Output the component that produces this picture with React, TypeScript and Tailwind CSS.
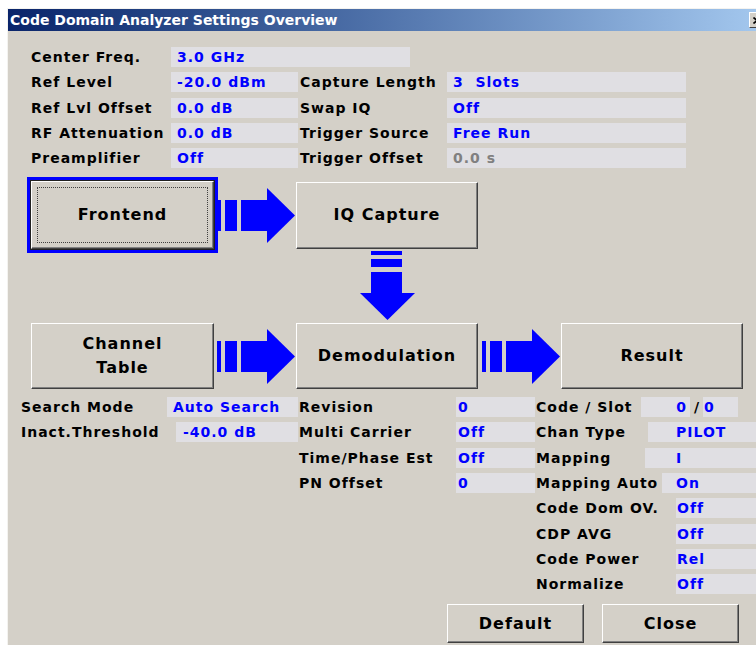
import React from 'react';

const BLUE = '#0000ff';

// Horizontal flow arrow: two bars, a shaft and a head
function RightArrow({ className = '' }: { className?: string }) {
    return (
        <svg width="78" height="55" viewBox="0 0 78 55" className={className} shapeRendering="crispEdges">
            <rect x="0" y="12" width="4" height="31" fill={BLUE} />
            <rect x="8" y="12" width="12" height="31" fill={BLUE} />
            <rect x="24" y="12" width="27" height="31" fill={BLUE} />
            <polygon points="50,0 78,27.5 50,55" fill={BLUE} shapeRendering="auto" />
        </svg>
    );
}

function DownArrow({ className = '' }: { className?: string }) {
    return (
        <svg width="55" height="69" viewBox="0 0 55 69" className={className} shapeRendering="crispEdges">
            <rect x="11" y="0" width="31" height="4" fill={BLUE} />
            <rect x="11" y="8" width="31" height="8" fill={BLUE} />
            <rect x="11" y="21" width="31" height="22" fill={BLUE} />
            <polygon points="0,42 55,42 27.5,69" fill={BLUE} shapeRendering="auto" />
        </svg>
    );
}

function Btn({ children, className = '' }: { children: React.ReactNode; className?: string }) {
    return (
        <div
            className={`flex flex-col items-center justify-center bg-[#d4d0c8] border border-t-white border-l-white border-r-[#404040] border-b-[#404040] shadow-[inset_-1px_-1px_0_#808080] text-[16px] font-bold tracking-[1px] leading-[24px] text-black ${className}`}
        >
            {children}
        </div>
    );
}

const label = 'text-[14px] leading-[20px] font-bold tracking-[1px] text-black whitespace-nowrap';
const field = 'h-[20px] bg-[#e0dfe3] text-[14px] leading-[20px] font-bold tracking-[1px] text-[#0000ff] flex items-center whitespace-pre';

const topRows = [
    { l: 'Ref Level', v: '-20.0 dBm', l2: 'Capture Length', v2: '3  Slots' },
    { l: 'Ref Lvl Offset', v: '0.0 dB', l2: 'Swap IQ', v2: 'Off' },
    { l: 'RF Attenuation', v: '0.0 dB', l2: 'Trigger Source', v2: 'Free Run' },
    { l: 'Preamplifier', v: 'Off', l2: 'Trigger Offset', v2: '0.0 s', gray: true },
];

const demodRows = [
    { l: 'Revision', v: '0' },
    { l: 'Multi Carrier', v: 'Off' },
    { l: 'Time/Phase Est', v: 'Off' },
    { l: 'PN Offset', v: '0' },
];

const resultRows = [
    { l: 'Chan Type', v: 'PILOT', w: 'w-[113px]', p: 'pl-[28px]' },
    { l: 'Mapping', v: 'I', w: 'w-[110px]', p: 'pl-[31px]' },
    { l: 'Mapping Auto', v: 'On', w: 'w-[127px]', p: 'pl-[14px]' },
    { l: 'Code Dom OV.', v: 'Off', w: 'w-[141px]', p: 'pl-[1px]' },
    { l: 'CDP AVG', v: 'Off', w: 'w-[141px]', p: 'pl-[1px]' },
    { l: 'Code Power', v: 'Rel', w: 'w-[141px]', p: 'pl-[1px]' },
    { l: 'Normalize', v: 'Off', w: 'w-[141px]', p: 'pl-[1px]' },
];

export default function App() {
    return (
        <div className="w-[756px] h-[645px] bg-white overflow-hidden font-['DejaVu_Sans',sans-serif]">
            <div className="ml-[7px] mt-[8px] w-[763px] h-[640px] border-l border-t border-[#f4f3f0] bg-[#d4d0c8]">
                {/* Title bar */}
                <div className="h-[22px] flex items-center bg-gradient-to-r from-[#0a246a] to-[#a6caf0] pl-[2px] pr-[5px]">
                    <div className="flex-1 text-white text-[14px] font-bold leading-none">Code Domain Analyzer Settings Overview</div>
                    <div className="w-[16px] h-[16px] flex items-center justify-center bg-[#d4d0c8] border border-t-white border-l-white border-r-[#404040] border-b-[#404040]">
                        <svg width="8" height="7" viewBox="0 0 8 7">
                            <path d="M0.5 0.5 L7.5 6.5 M7.5 0.5 L0.5 6.5" stroke="#000" strokeWidth="1.6" />
                        </svg>
                    </div>
                </div>

                {/* Frontend / capture settings */}
                <div className="pt-[16px] pl-[23px] flex flex-col gap-[5.3px]">
                    <div className="flex items-center">
                        <div className={`${label} w-[140px]`}>Center Freq.</div>
                        <div className={`${field} w-[239px] pl-[6px]`}>3.0 GHz</div>
                    </div>
                    {topRows.map((r) => (
                        <div key={r.l} className="flex items-center">
                            <div className={`${label} w-[140px]`}>{r.l}</div>
                            <div className={`${field} w-[127px] pl-[6px]`}>{r.v}</div>
                            <div className={`${label} w-[149px] pl-[2px]`}>{r.l2}</div>
                            <div className={`${field} w-[239px] pl-[6px] ${r.gray ? 'text-[#808080]' : ''}`}>{r.v2}</div>
                        </div>
                    ))}
                </div>

                {/* Block diagram */}
                <div className="mt-[9px] pl-[19px] grid grid-cols-[191px_78px_182px_83px_182px] grid-rows-[76px_70px_66px]">
                    <div className="border-[3px] border-[#0000ff] flex">
                        <div className="flex-1 border border-[#202020] flex">
                            <Btn className="flex-1 relative">
                                Frontend
                                <span className="absolute inset-[5px] border border-dotted border-[#404040]" />
                            </Btn>
                        </div>
                    </div>
                    <RightArrow className="self-center -ml-px" />
                    <Btn className="h-[67px] self-center">IQ Capture</Btn>
                    <div />
                    <div />

                    <div />
                    <div />
                    <DownArrow className="justify-self-center -mt-[2px]" />
                    <div />
                    <div />

                    <Btn className="w-[183px] justify-self-center">
                        <span>Channel</span>
                        <span>Table</span>
                    </Btn>
                    <RightArrow className="self-center -ml-px" />
                    <Btn>Demodulation</Btn>
                    <RightArrow className="self-center ml-[4px]" />
                    <Btn>Result</Btn>
                </div>

                {/* Channel / demodulation / result settings */}
                <div className="mt-[8px] pl-[13px] flex items-start">
                    <div className="w-[277px] flex flex-col gap-[5.3px]">
                        <div className="flex items-center">
                            <div className={`${label} w-[146px]`}>Search Mode</div>
                            <div className={`${field} w-[131px] pl-[6px]`}>Auto Search</div>
                        </div>
                        <div className="flex items-center">
                            <div className={`${label} w-[155px]`}>Inact.Threshold</div>
                            <div className={`${field} w-[122px] pl-[7px]`}>-40.0 dB</div>
                        </div>
                    </div>
                    <div className="w-[237px] flex flex-col gap-[5.3px]">
                        {demodRows.map((r) => (
                            <div key={r.l} className="flex items-center">
                                <div className={`${label} w-[158px] pl-[1px]`}>{r.l}</div>
                                <div className={`${field} w-[79px] pl-[2px]`}>{r.v}</div>
                            </div>
                        ))}
                    </div>
                    <div className="flex-1 flex flex-col gap-[5.3px]">
                        <div className="flex items-center">
                            <div className={`${label} w-[106px] pl-[1px]`}>Code / Slot</div>
                            <div className={`${field} w-[49px] justify-end pr-[3px]`}>0</div>
                            <div className="w-[13px] text-center text-[14px] leading-[20px] font-bold text-black">/</div>
                            <div className={`${field} w-[35px] pl-[1px]`}>0</div>
                        </div>
                        {resultRows.map((r) => (
                            <div key={r.l} className="flex items-center">
                                <div className={`${label} ${r.w} pl-[1px]`}>{r.l}</div>
                                <div className={`${field} flex-1 ${r.p}`}>{r.v}</div>
                            </div>
                        ))}
                    </div>
                </div>

                {/* Dialog buttons */}
                <div className="mt-[10px] pl-[439px] flex gap-[18px]">
                    <Btn className="w-[137px] h-[39px] tracking-[0.7px]">Default</Btn>
                    <Btn className="w-[137px] h-[39px] tracking-[0.7px]">Close</Btn>
                </div>
            </div>
        </div>
    );
}
